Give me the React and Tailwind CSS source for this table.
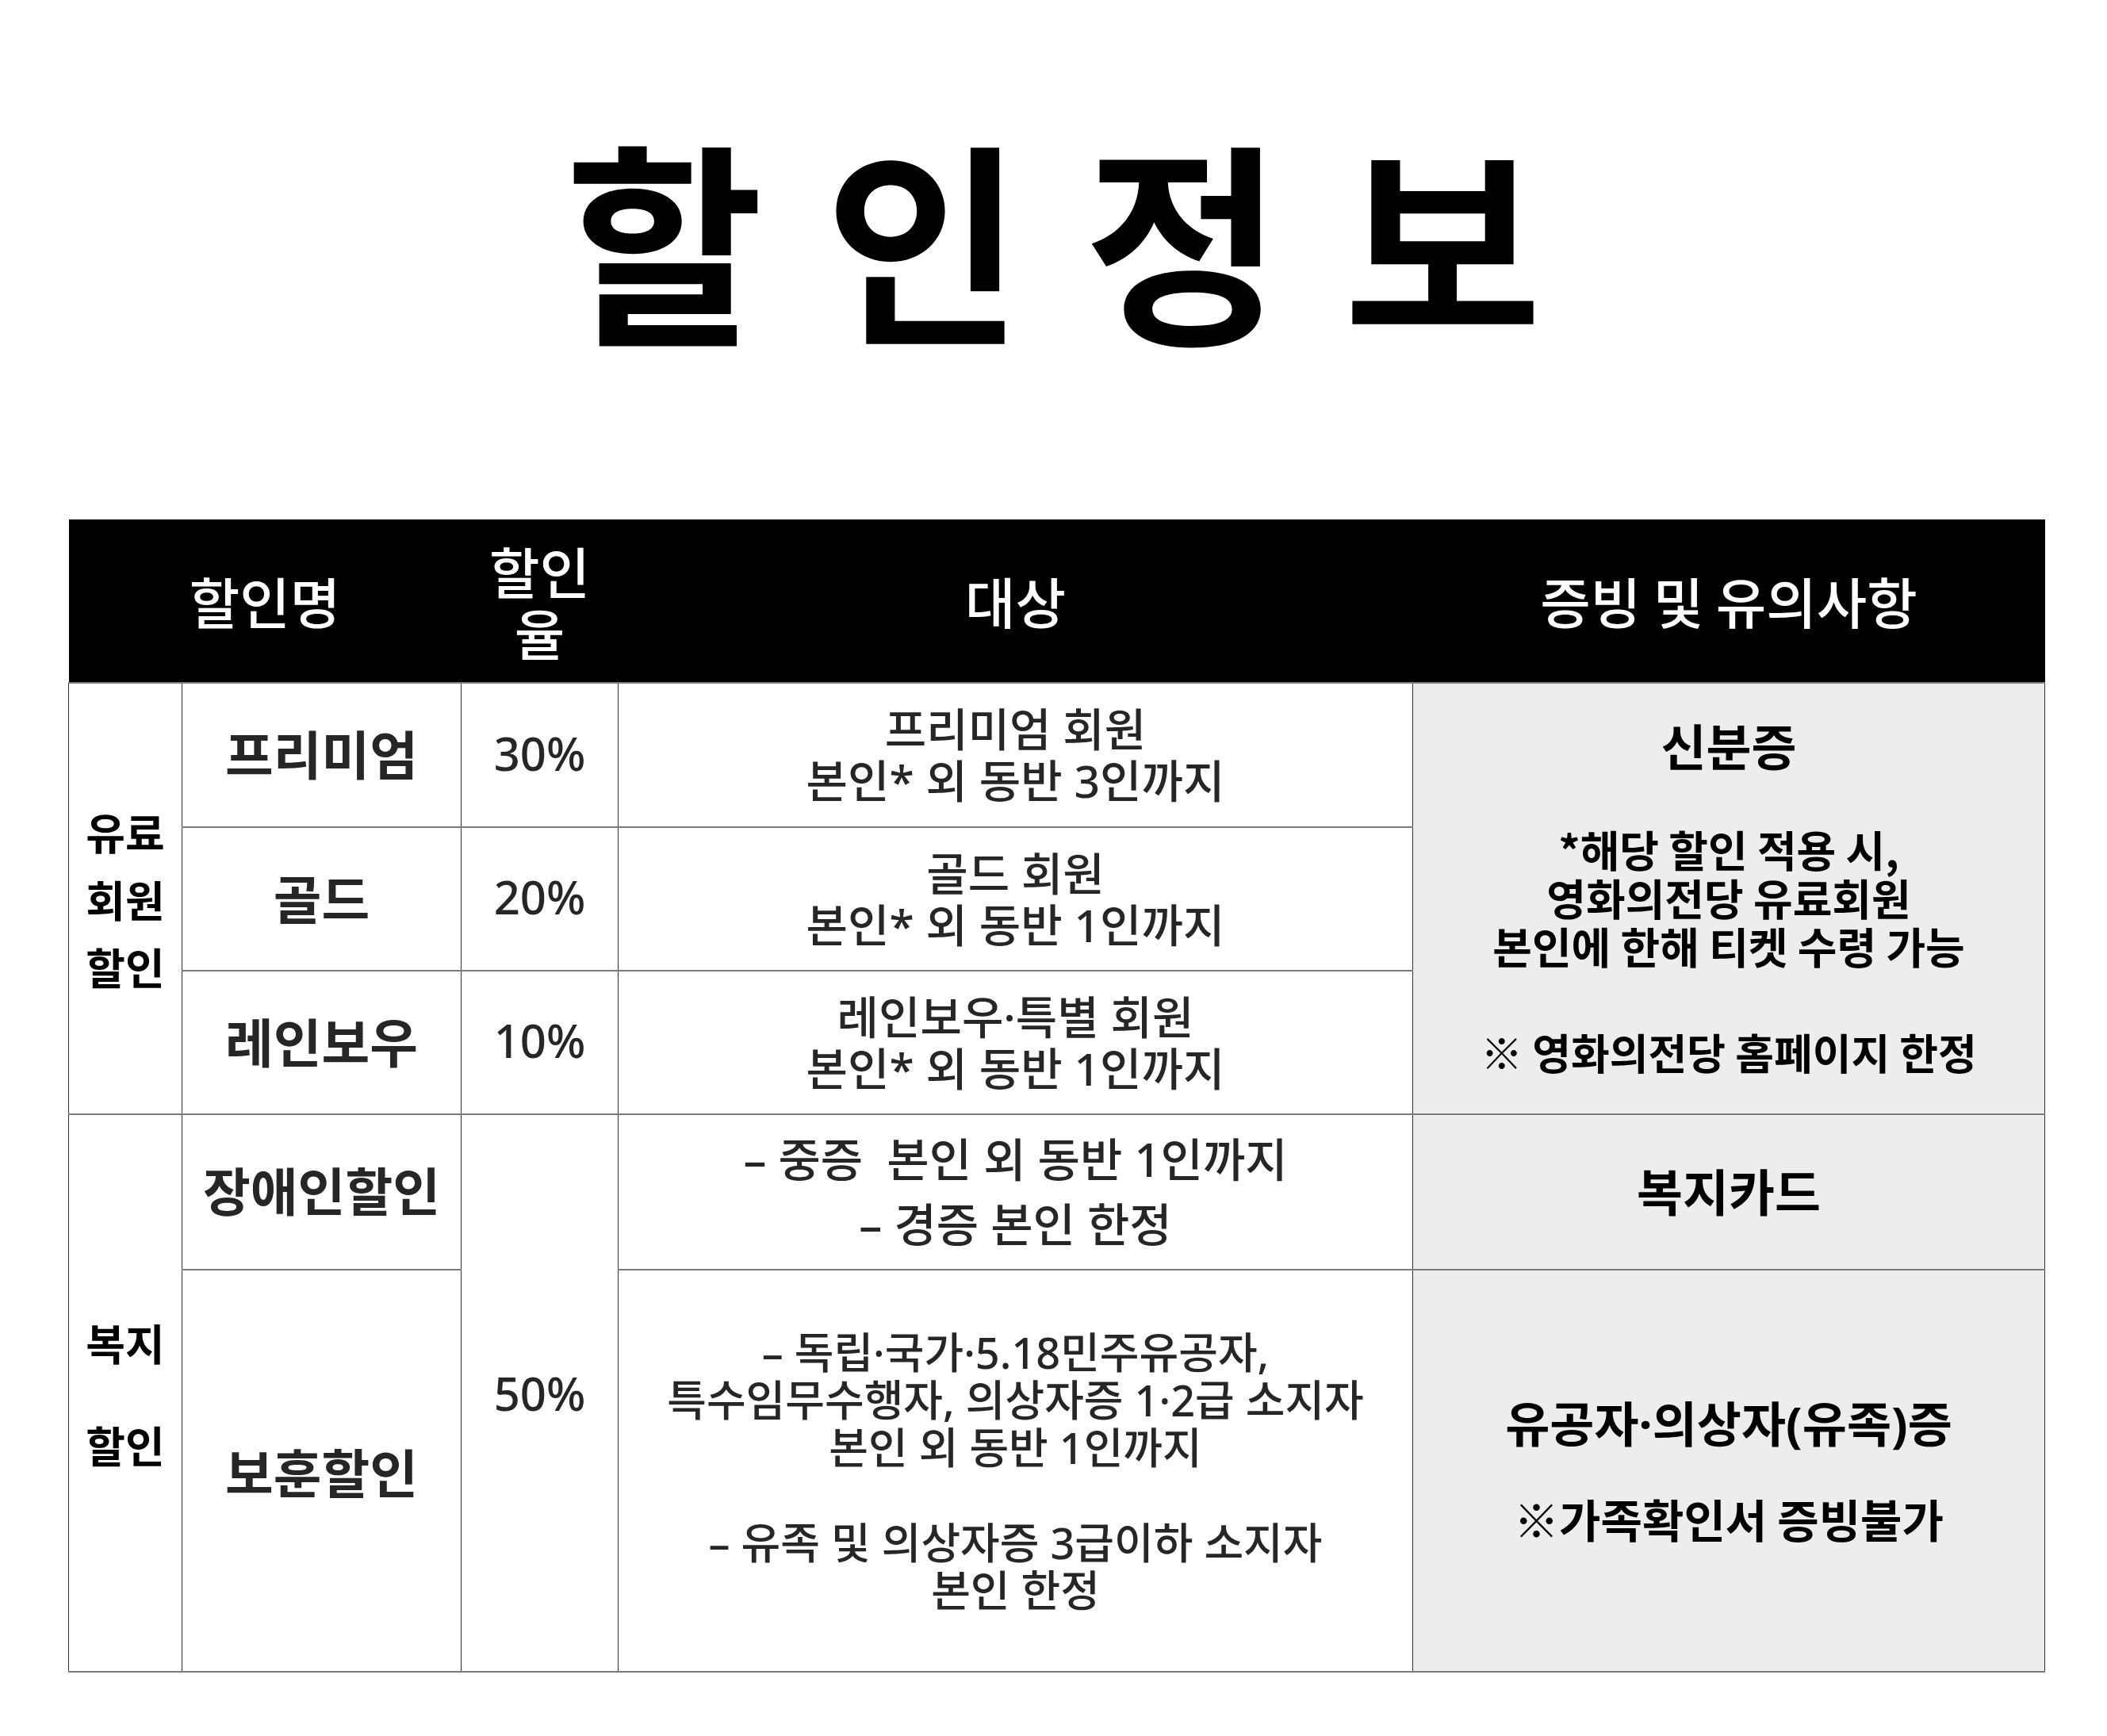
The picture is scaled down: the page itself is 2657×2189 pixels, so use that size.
export default function App() {
  const cjk = { fontFamily: '"Noto Sans CJK KR", "Noto Sans", sans-serif' };
  const mixed = { fontFamily: '"Noto Sans", "Noto Sans CJK KR", sans-serif' };
  const td = "border-x border-x-[#333333] border-y-2 border-y-[#7a7a7a] text-center align-middle p-0";
  return (
    <div className="w-[2657px] h-[2189px] bg-white" style={cjk}>
      <div className="pt-[159px] flex justify-center">
        <h1 className="text-[272px] leading-none font-bold text-black tracking-[77px] pl-[77px]">할인정보</h1>
      </div>
      <div className="pt-[224px] pl-[86px]">
        <table className="border-collapse table-fixed w-[2492px]">
          <colgroup>
            <col className="w-[143px]" />
            <col className="w-[352px]" />
            <col className="w-[198px]" />
            <col className="w-[1002px]" />
            <col className="w-[797px]" />
          </colgroup>
          <thead>
            <tr className="h-[206px] bg-black text-white text-[69px] font-medium">
              <th colSpan={2} className="p-0 font-medium">할인명</th>
              <th className="p-0 font-medium leading-[78px]">할인<br />율</th>
              <th className="p-0 font-medium">대상</th>
              <th className="p-0 font-medium">증빙 및 유의사항</th>
            </tr>
          </thead>
          <tbody>
            <tr className="h-[182px]">
              <td rowSpan={3} className={`${td} text-[54px] font-bold text-black leading-[85px]`}>유료<br />회원<br />할인</td>
              <td className={`${td} text-[66px] font-bold text-[#262626]`}><div className="-mt-[8px]">프리미엄</div></td>
              <td className={`${td} text-[58px] font-medium text-[#262626]`} style={mixed}><div className="-mt-[6px]">30%</div></td>
              <td className={`${td} text-[57px] font-medium text-[#262626] leading-[65px]`} style={mixed}>프리미엄 회원<br />본인* 외 동반 3인까지</td>
              <td rowSpan={3} className={`${td} bg-[#ededed] text-black font-bold`}>
                <div className="flex flex-col items-center">
                  <div className="text-[62px] leading-[70px] -mt-[6px]">신분증</div>
                  <div className="mt-[66px] text-[54px] leading-[61px]">*해당 할인 적용 시,<br />영화의전당 유료회원<br />본인에 한해 티켓 수령 가능</div>
                  <div className="mt-[73px] text-[53px] leading-[61px]">※ 영화의전당 홈페이지 한정</div>
                </div>
              </td>
            </tr>
            <tr className="h-[181px]">
              <td className={`${td} text-[66px] font-bold text-[#262626]`}><div className="-mt-[6px]">골드</div></td>
              <td className={`${td} text-[58px] font-medium text-[#262626]`} style={mixed}><div className="-mt-[6px]">20%</div></td>
              <td className={`${td} text-[57px] font-medium text-[#262626] leading-[65px]`} style={mixed}>골드 회원<br />본인* 외 동반 1인까지</td>
            </tr>
            <tr className="h-[181px]">
              <td className={`${td} text-[66px] font-bold text-[#262626]`}><div className="-mt-[6px]">레인보우</div></td>
              <td className={`${td} text-[58px] font-medium text-[#262626]`} style={mixed}><div className="-mt-[6px]">10%</div></td>
              <td className={`${td} text-[57px] font-medium text-[#262626] leading-[65px]`} style={mixed}>레인보우·특별 회원<br />본인* 외 동반 1인까지</td>
            </tr>
            <tr className="h-[196px]">
              <td rowSpan={2} className={`${td} text-[54px] font-bold text-black leading-[129px]`}>복지<br />할인</td>
              <td className={`${td} text-[65px] font-bold text-[#262626]`}><div className="-mt-[6px]">장애인할인</div></td>
              <td rowSpan={2} className={`${td} text-[58px] font-medium text-[#262626]`} style={mixed}>50%</td>
              <td className={`${td} text-[58px] font-medium text-[#262626] leading-[82px]`} style={mixed}>– 중증&nbsp; 본인 외 동반 1인까지<br />– 경증 본인 한정</td>
              <td className={`${td} bg-[#ededed] text-black font-bold text-[63px]`}><div className="-mt-[6px]">복지카드</div></td>
            </tr>
            <tr className="h-[507px]">
              <td className={`${td} text-[66px] font-bold text-[#262626]`}>보훈할인</td>
              <td className={`${td} text-[54px] font-medium text-[#262626] leading-[60px]`} style={mixed}>
                – 독립·국가·5.18민주유공자,<br />특수임무수행자, 의상자증 1·2급 소지자<br />본인 외 동반 1인까지<br /><br />– 유족 및 의상자증 3급이하 소지자<br />본인 한정
              </td>
              <td className={`${td} bg-[#ededed] text-black font-bold`}>
                <div className="flex flex-col items-center">
                  <div className="text-[61px] leading-[70px]" style={mixed}>유공자·의상자(유족)증</div>
                  <div className="mt-[48px] text-[57px] leading-[70px] font-semibold">※가족확인서 증빙불가</div>
                </div>
              </td>
            </tr>
          </tbody>
        </table>
      </div>
    </div>
  );
}
